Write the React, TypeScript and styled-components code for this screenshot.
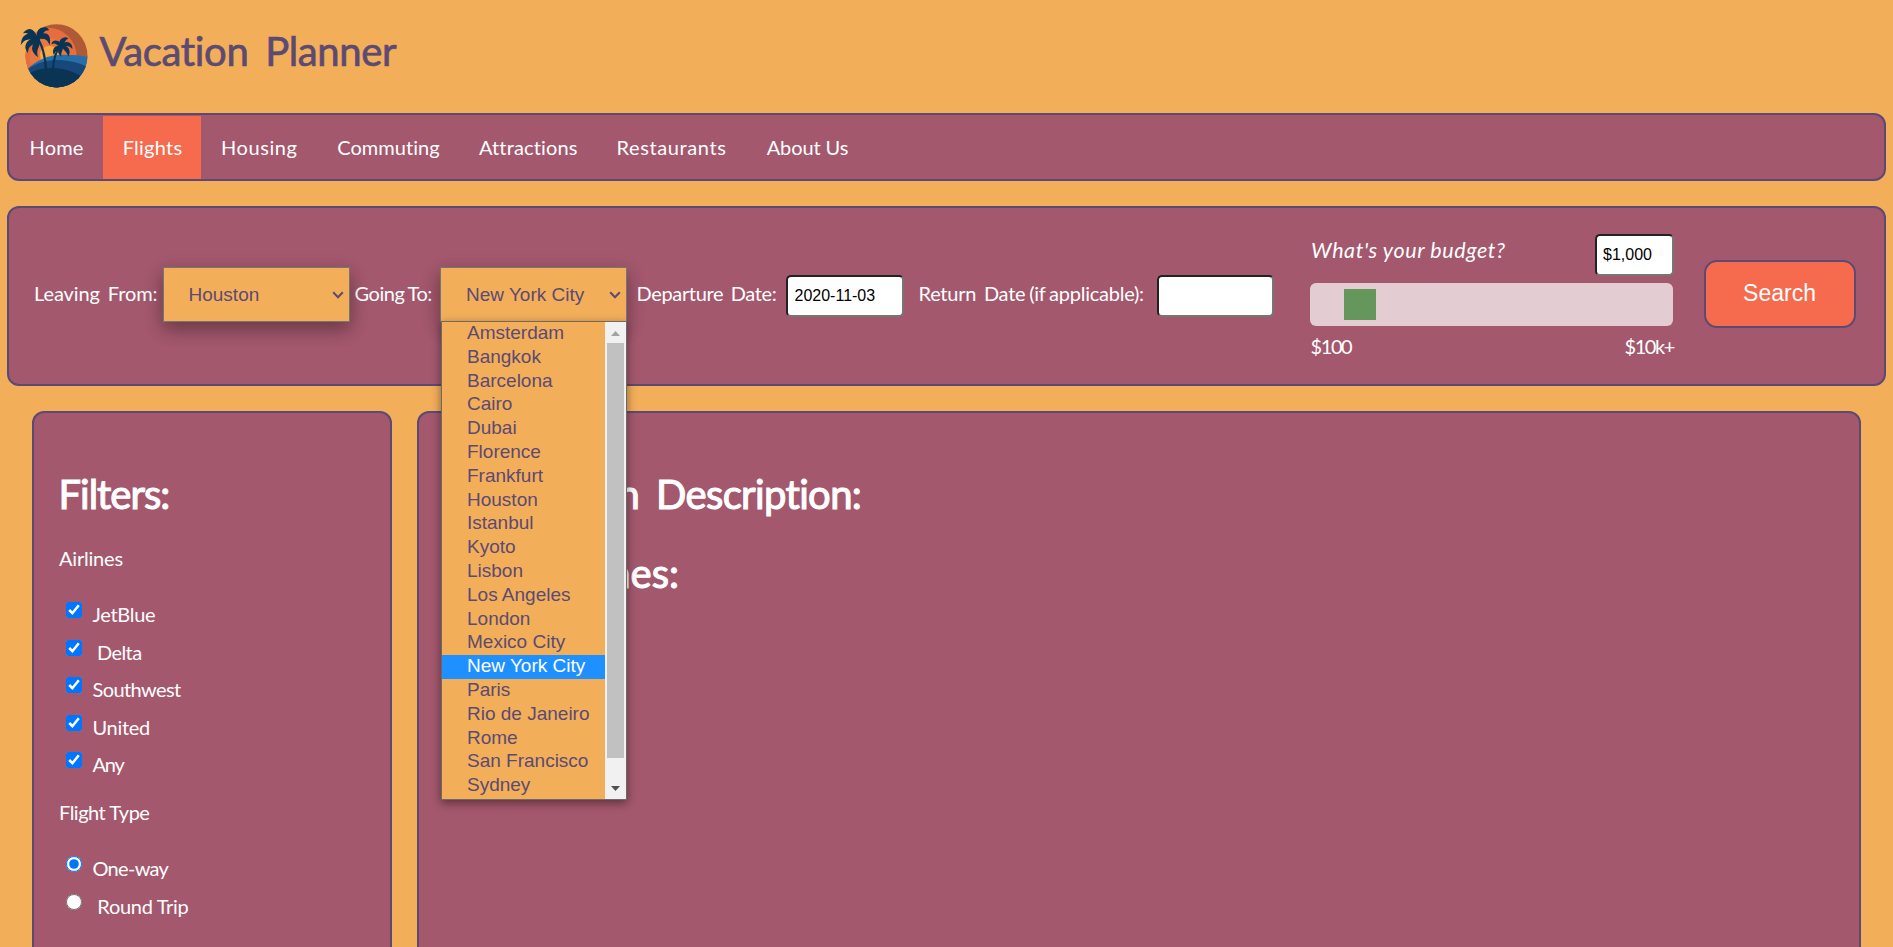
import React from "react";
import styled, { createGlobalStyle } from "styled-components";

const plum = "#5c4a72";
const rose = "#a3586d";
const sand = "#f3ae5a";
const coral = "#f66a4d";

const GlobalStyle = createGlobalStyle`
  *, *::before, *::after { box-sizing: border-box; }
  html, body { margin: 0; height: 100%; overflow: hidden; background: ${sand}; }
  body {
    font-family: Lato, "Liberation Sans", sans-serif;
    font-size: 20px;
    line-height: 24px;
    color: #fff;
    font-variant-ligatures: none;
  }
`;

const Page = styled.div`
  height: 100vh;
  overflow: hidden;
  display: flex;
  flex-direction: column;
  padding: 0 7px;
`;

const Header = styled.header`
  display: flex;
  align-items: flex-start;
  height: 113px;
  flex: none;
  padding: 24px 0 0 13px;
`;

const Logo = styled.svg`
  width: 68px;
  height: 64px;
  flex: none;
`;

const SiteTitle = styled.h1`
  margin: 3px 0 0 11.5px;
  font-size: 40px;
  line-height: 48px;
  font-weight: 400;
  letter-spacing: -0.35px;
  word-spacing: -1.5px;
  color: ${plum};
  -webkit-text-stroke: 0.7px ${plum};
`;

const Panel = styled.section`
  background: ${rose};
  border: 2px solid ${plum};
  border-radius: 12px;
`;

const NavBar = styled(Panel).attrs({ as: "nav" })`
  display: flex;
  flex: none;
  height: 68px;
  padding-top: 1px;
`;

const NavItem = styled.a<{ $width: number; $active?: boolean; $tracking?: number }>`
  display: flex;
  align-items: center;
  justify-content: center;
  width: ${(p) => p.$width}px;
  padding: 0 0 2px 1px;
  letter-spacing: ${(p) => p.$tracking ?? 0}px;
  background: ${(p) => (p.$active ? coral : "transparent")};
  color: #fff;
`;

const SearchPanel = styled(Panel)`
  display: flex;
  flex: none;
  align-items: center;
  height: 180px;
  margin-top: 25px;
  padding-left: 25px;
`;

const FieldLabel = styled.label<{ $width: number; $gap?: number; $tracking: number }>`
  flex: none;
  width: ${(p) => p.$width}px;
  margin: 0 0 6px ${(p) => p.$gap ?? 0}px;
  letter-spacing: ${(p) => p.$tracking}px;
  word-spacing: -1px;
  white-space: nowrap;
`;

const SelectBox = styled.div`
  position: relative;
  flex: none;
  display: flex;
  align-items: center;
  justify-content: space-between;
  width: 187px;
  height: 55px;
  margin-bottom: 3px;
  padding: 0 5px 0 25px;
  border: 1px solid #767676;
  background: ${sand};
  color: ${plum};
  font: 19px "Liberation Sans", Arial, sans-serif;
  box-shadow: 0 8px 16px rgba(0, 0, 0, 0.2), 0 6px 20px rgba(0, 0, 0, 0.19);
`;

const Chevron = styled.svg`
  width: 12px;
  height: 8px;
`;

const Menu = styled.div`
  position: absolute;
  z-index: 2;
  top: 53px;
  left: 0;
  width: 186px;
  height: 479px;
  display: flex;
  border: 1px solid #6f6a66;
  background: ${sand};
  box-shadow: 0 3px 9px rgba(0, 0, 0, 0.45);
`;

const Options = styled.ul`
  flex: 1;
  margin: 0;
  padding: 0;
  list-style: none;
  overflow: hidden;
`;

const Option = styled.li<{ $selected?: boolean }>`
  height: 23.8px;
  padding-left: 25px;
  line-height: 21px;
  white-space: nowrap;
  background: ${(p) => (p.$selected ? "#1e90ff" : "transparent")};
  color: ${(p) => (p.$selected ? "#fff" : plum)};
`;

const ScrollTrack = styled.div`
  display: flex;
  flex-direction: column;
  align-items: center;
  justify-content: space-between;
  width: 21px;
  padding: 9px 0 8px;
  background: #f1f1f1;
`;

const ScrollThumb = styled.div`
  width: 17px;
  height: 415px;
  margin: 7px 0 auto;
  background: #c1c1c1;
`;

const ScrollArrow = styled.svg`
  width: 9px;
  height: 5px;
`;

const TextInput = styled.input<{ $width: number }>`
  flex: none;
  width: ${(p) => p.$width}px;
  height: 42px;
  padding: 0 6.5px;
  border: 2px solid;
  border-color: #222 #767676 #767676 #222;
  border-radius: 5px;
  background: #fff;
  color: #000;
  font: 16px "Liberation Sans", Arial, sans-serif;
`;

const Budget = styled.div`
  flex: none;
  width: 364.5px;
  margin-left: 36px;
`;

const BudgetTop = styled.div`
  display: flex;
  justify-content: space-between;
  align-items: flex-start;
`;

const BudgetQuestion = styled.em`
  margin-top: 3px;
  padding-left: 1.5px;
  font-size: 21.5px;
  line-height: 26px;
  letter-spacing: 0.6px;
`;

const Slider = styled.input.attrs({ type: "range" })`
  appearance: none;
  display: block;
  width: 363px;
  height: 43px;
  margin: 7px 0 8px;
  border-radius: 6px;
  background: #e3ccd2;

  &::-webkit-slider-thumb {
    appearance: none;
    width: 32px;
    height: 31px;
    background: #65965c;
  }
`;

const BudgetScale = styled.div`
  display: flex;
  justify-content: space-between;
  padding-left: 1px;
  letter-spacing: -1.4px;
`;

const SearchButton = styled.button`
  width: 152px;
  height: 68px;
  margin: 0 0 4px 29.5px;
  padding: 0 0 2px;
  border: 2px solid ${plum};
  border-radius: 13px;
  background: ${coral};
  color: #fff;
  font: 23px "Liberation Sans", Arial, sans-serif;
`;

const Content = styled.main`
  display: flex;
  gap: 25px;
  flex: none;
  height: 700px;
  margin: 25px 25px 0;
`;

const Filters = styled(Panel)`
  width: 360px;
  padding: 57px 25px 0;
`;

const Results = styled(Panel)`
  flex: 1;
  padding: 57px 24px 0;
`;

const Heading = styled.h2<{ $tracking: number; $indent?: number }>`
  margin: 0 0 31px ${(p) => p.$indent ?? 0}px;
  font-size: 40px;
  line-height: 48px;
  font-weight: 400;
  letter-spacing: ${(p) => p.$tracking}px;
  word-spacing: -1.2px;
  white-space: nowrap;
  -webkit-text-stroke: 1.1px #fff;
`;

const GroupTitle = styled.div<{ $tracking: number }>`
  margin: 0 0 25.500px;
  letter-spacing: ${(p) => p.$tracking}px;

  ${Heading} + & {
    margin-top: -3px;
  }
`;

const Group = styled.div`
  margin-bottom: 17px;
`;

const Choice = styled.label<{ $tracking: number }>`
  display: flex;
  align-items: center;
  height: 37.5px;
  padding-left: 7px;
  letter-spacing: ${(p) => p.$tracking}px;

  input {
    width: 16px;
    height: 16px;
    margin: 0 10.5px 8px 0;
  }
`;

const cities = [
  "Amsterdam", "Bangkok", "Barcelona", "Cairo", "Dubai", "Florence", "Frankfurt",
  "Houston", "Istanbul", "Kyoto", "Lisbon", "Los Angeles", "London", "Mexico City",
  "New York City", "Paris", "Rio de Janeiro", "Rome", "San Francisco", "Sydney",
];

const tabs = [
  { name: "Home", width: 94, tracking: 0.15 },
  { name: "Flights", width: 98, tracking: 0.25 },
  { name: "Housing", width: 115.5, tracking: 0.55 },
  { name: "Commuting", width: 143, tracking: 0.05 },
  { name: "Attractions", width: 136.5, tracking: 0.15 },
  { name: "Restaurants", width: 150, tracking: 0.6 },
  { name: "About Us", width: 122, tracking: -0.1 },
];

const airlines = [
  { name: "JetBlue", tracking: -0.3 },
  { name: "\u00a0Delta", tracking: -0.6 },
  { name: "Southwest", tracking: -0.6 },
  { name: "United", tracking: -0.3 },
  { name: "Any", tracking: -1.2 },
];

const Arrow = () => (
  <Chevron viewBox="0 0 12 8">
    <path d="M1.2 1.2 6 6.2l4.8-5" fill="none" stroke={plum} strokeWidth="2" />
  </Chevron>
);

const PalmLogo = () => (
  <Logo viewBox="29 26 204 192">
    <defs>
      <clipPath id="disc">
        <ellipse cx="138.5" cy="121.5" rx="93" ry="95" />
      </clipPath>
    </defs>
    <g clipPath="url(#disc)">
      <rect x="29" y="26" width="204" height="192" fill="#b05a35" />
      <circle cx="112" cy="124" r="87" fill="#e66d3e" />
      <circle cx="116" cy="126" r="58" fill="#ea7740" />
      <circle cx="117" cy="119" r="28" fill="#f7a945" />
      <path d="M40 172Q90 117 160 118q40-1 80 8v94H40z" fill="#266fab" />
      <path d="M40 172Q85 130 150 134q45 2 90 24v64H40z" fill="#17487a" />
      <path d="M40 182q45-27 92-24 52 2 98 36v30H40z" fill="#0a3453" />
    </g>
    <g fill="#0a3453">
      <path d="M82 66Q104 90 111 162h-8Q100 98 78 70z" />
      <path d="M153 92q-20 26-22 70h-7q4-50 25-72z" />
      <path d="M84 72Q78 52 58 54 32 58 31 90q8-15 21-17 16-3 32-1z" />
      <path d="M84 72Q72 40 58 41q-14 2-20 13 10-3 17 3 10 9 26 17z" />
      <path d="M78 68Q78 32 106 36q7 2 11 9-13-1-17 7-6 12-18 18z" />
      <path d="M80 68q14-20 31-12 12 8 7 34-6-16-16-19-10-2-22 1z" />
      <path d="M86 66Q44 70 45 98q2 9 8 15 0-16 9-22 14-9 24-21z" />
      <path d="M84 66Q58 90 68 110q6 10 15 16-5-16 1-28 8-16 4-30z" />
      <path d="M156 94q-6-22-25-18-7 2-8 11 9-5 14 0 8 7 19 9z" />
      <path d="M150 92q-8-20 9-25 9-3 15 3-8 2-10 9-3 9-12 15z" />
      <path d="M150 92q14-18 29-9 8 6 7 18-8-10-15-8-9 3-21 3z" />
      <path d="M156 90q-26 0-28 16-1 7 3 13 3-10 9-13 10-6 16-14z" />
      <path d="M152 90q27 2 26 20-1 8-4 14-3-10-8-15-8-8-14-17z" />
      <path d="M156 90q-16 12-12 22 3 7 9 12-1-10 2-16 4-9 3-17z" />
    </g>
  </Logo>
);

export default function App() {
  return (
    <Page>
      <GlobalStyle />
      <Header>
        <PalmLogo />
        <SiteTitle>Vacation{"\u00a0"} Planner</SiteTitle>
      </Header>

      <NavBar>
        {tabs.map((t) => (
          <NavItem key={t.name} $width={t.width} $tracking={t.tracking} $active={t.name === "Flights"}>
            {t.name}
          </NavItem>
        ))}
      </NavBar>

      <SearchPanel>
        <FieldLabel $width={128.5} $tracking={-0.1}>Leaving{"\u00a0"} From:</FieldLabel>
        <SelectBox>
          Houston
          <Arrow />
        </SelectBox>
        <FieldLabel $width={85.5} $gap={5} $tracking={-0.45}>Going To:</FieldLabel>
        <SelectBox>
          New York City
          <Arrow />
          <Menu>
            <Options>
              {cities.map((c) => (
                <Option key={c} $selected={c === "New York City"}>{c}</Option>
              ))}
            </Options>
            <ScrollTrack>
              <ScrollArrow viewBox="0 0 9 5">
                <path d="M0 5 4.5 0 9 5z" fill="#a3a3a3" />
              </ScrollArrow>
              <ScrollThumb />
              <ScrollArrow viewBox="0 0 9 5">
                <path d="M0 0h9L4.5 5z" fill="#505050" />
              </ScrollArrow>
            </ScrollTrack>
          </Menu>
        </SelectBox>
        <FieldLabel $width={149.5} $gap={9.5} $tracking={-0.35}>Departure{"\u00a0"} Date:</FieldLabel>
        <TextInput $width={117.5} defaultValue="2020-11-03" />
        <FieldLabel $width={238.5} $gap={15} $tracking={-0.25}>Return{"\u00a0"} Date (if applicable):</FieldLabel>
        <TextInput $width={116.5} />
        <Budget>
          <BudgetTop>
            <BudgetQuestion>What's your budget?</BudgetQuestion>
            <TextInput $width={79.5} defaultValue="$1,000" />
          </BudgetTop>
          <Slider min={0} max={1000} defaultValue={105} />
          <BudgetScale>
            <span>$100</span>
            <span>$10k+</span>
          </BudgetScale>
        </Budget>
        <SearchButton>Search</SearchButton>
      </SearchPanel>

      <Content>
        <Filters>
          <Heading $tracking={-1} $indent={-0.5}>Filters:</Heading>
          <GroupTitle $tracking={-0.2}>Airlines</GroupTitle>
          <Group>
            {airlines.map((a) => (
              <Choice key={a.name} $tracking={a.tracking}>
                <input type="checkbox" defaultChecked />
                {a.name}
              </Choice>
            ))}
          </Group>
          <GroupTitle $tracking={-0.5}>Flight Type</GroupTitle>
          <Group>
            <Choice $tracking={-0.7}>
              <input type="radio" name="type" defaultChecked />
              One-way
            </Choice>
            <Choice $tracking={-0.3}>
              <input type="radio" name="type" />
              {"\u00a0"}Round Trip
            </Choice>
          </Group>
          <GroupTitle $tracking={-0.7}>Number of Stops</GroupTitle>
        </Filters>
        <Results>
          <Heading $tracking={-0.65}>Destination{"\u00a0"} Description:</Heading>
          <Heading $tracking={0}>Best{"\u00a0"} Airlines:</Heading>
        </Results>
      </Content>
    </Page>
  );
}
